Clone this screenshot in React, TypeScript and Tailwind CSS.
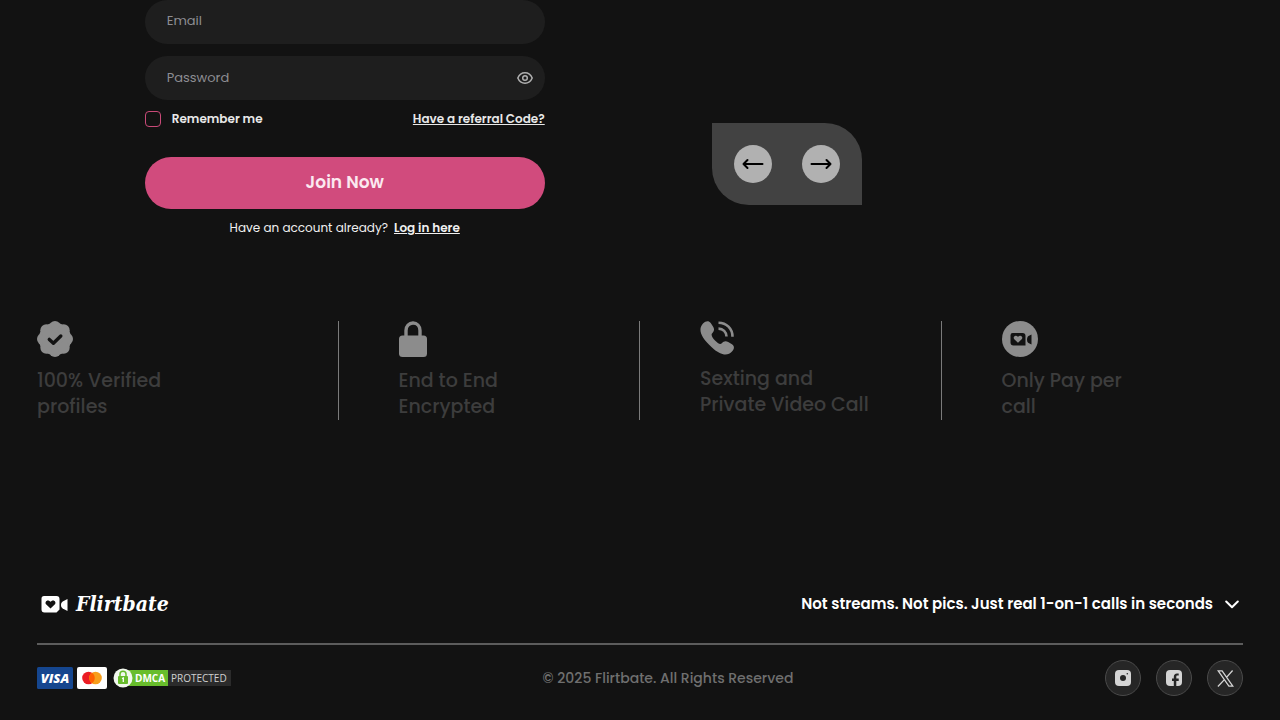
import { useState } from 'react';
import type { ReactNode } from 'react';

const VerifiedIcon = () => (
    <svg width="36" height="36" viewBox="0 0 36 36" fill="#8c8c8c" aria-hidden="true">
        <circle cx="18" cy="18" r="16.200" />
        <circle cx="18" cy="6" r="6" />
        <circle cx="18" cy="30" r="6" />
        <circle cx="6" cy="18" r="6" />
        <circle cx="30" cy="18" r="6" />
        <circle cx="9.300" cy="9.300" r="6" />
        <circle cx="26.700" cy="9.300" r="6" />
        <circle cx="9.300" cy="26.700" r="6" />
        <circle cx="26.700" cy="26.700" r="6" />
        <path d="M12.300 18.400l4.100 3.800 7.400-7.200" fill="none" stroke="#121212" strokeWidth="3.400" strokeLinecap="round" strokeLinejoin="round" />
    </svg>
);

const LockIcon = () => (
    <svg width="28" height="36" viewBox="0 0 28 36" aria-hidden="true">
        <path d="M7 16V9.500C7 5 10 2 14 2s7 3 7 7.500V16" fill="none" stroke="#8c8c8c" strokeWidth="3.400" />
        <rect y="14.500" width="28" height="21.500" rx="3.500" fill="#8c8c8c" />
    </svg>
);

const PhoneIcon = () => (
    <svg width="34" height="34" viewBox="0 0 34 34" aria-hidden="true">
        <path
            d="M3 2.500C6-.5 8.800-.5 10.700 2L13 5.500c1.700 2.700 1.200 4.500-1 7-1.200 1.500.5 4.500 3 7s5 4.200 6.500 3c2.300-2.500 4.200-3 6.700-1.500l3.800 2.300c2.500 1.700 2.600 4.200 0 7.200-4 4.500-11 4.500-20-4C0 15.500-2 8 3 2.500z"
            fill="#8c8c8c"
        />
        <path d="M18.500 7.600c4.500 0 8 3.500 8 8M18.500 1.700c8 0 14 6 14 14" fill="none" stroke="#8c8c8c" strokeWidth="2.600" />
    </svg>
);

const PayIcon = () => (
    <svg width="36" height="36" viewBox="0 0 36 36" aria-hidden="true">
        <circle cx="18" cy="18" r="18" fill="#8c8c8c" />
        <path d="M10.800 12h9.700a3 3 0 013 3v9.500h-12a3 3 0 01-3-3v-7.300a2.200 2.200 0 012.300-2.200z" fill="#121212" />
        <path d="M29.500 13.500v10l-3-1.500c-2-1-2-6 0-7z" fill="#121212" />
        <path d="M16 21.800l-3.700-3.500c-1.600-1.700.2-4.500 2.400-3.400l1.300.9 1.300-.9c2.200-1.100 4 1.700 2.400 3.400z" fill="#8c8c8c" />
    </svg>
);

const LogoMark = () => (
    <svg width="27" height="17" viewBox="0 0 27 17" fill="#fff" aria-hidden="true">
        <path d="M3 0h12.500a3 3 0 013 3v10.500l-3 3H3.500a3 3 0 01-3-3v-11A2.500 2.500 0 013 0z" />
        <path d="M26.500 3v12l-4.800-2.500c-2.300-1.500-2.300-5.500 0-7z" />
        <path d="M9.500 12.500L5.300 8.600c-2-2.200.3-5.200 2.800-3.900l1.400 1 1.400-1c2.500-1.300 4.800 1.700 2.800 3.900z" fill="#121212" />
    </svg>
);

const EyeIcon = () => (
    <svg width="16" height="12" viewBox="0 0 16 12" fill="none" stroke="#b0b0b0" strokeWidth="1.500" aria-hidden="true">
        <path d="M.8 6C2.200 2.600 4.800.8 8 .8S13.800 2.600 15.200 6C13.800 9.400 11.200 11.200 8 11.200S2.200 9.400.8 6z" />
        <circle cx="8" cy="6" r="2.300" />
    </svg>
);

const ArrowIcon = () => (
    <svg width="22" height="12" viewBox="0 0 22 12" fill="none" stroke="#000" strokeWidth="2" strokeLinecap="round" strokeLinejoin="round" aria-hidden="true">
        <path d="M20.500 6H1.500M5.500 2l-4 4 4 4" />
    </svg>
);

const VisaCard = () => (
    <svg width="36" height="22" viewBox="0 0 36 22" role="img" aria-label="Visa">
        <rect width="36" height="22" rx="1.500" fill="#15468f" />
        <text x="18" y="15.500" textAnchor="middle" fill="#fff" fontSize="13" fontWeight="800" fontStyle="italic" fontFamily="'Open Sans', sans-serif">VISA</text>
    </svg>
);

const MasterCard = () => (
    <svg width="30" height="22" viewBox="0 0 30 22" role="img" aria-label="Mastercard">
        <rect width="30" height="22" rx="2" fill="#fff" />
        <circle cx="11.500" cy="11" r="6.300" fill="#eb1c24" />
        <circle cx="18.500" cy="11" r="6.300" fill="#f79e1b" />
        <path d="M15 5.800a6.300 6.300 0 010 10.400 6.300 6.300 0 010-10.400z" fill="#ff5f00" />
    </svg>
);

const DmcaBadge = () => (
    <svg width="118" height="20" viewBox="0 0 118 20" role="img" aria-label="DMCA Protected">
        <rect x="55" y="2" width="63" height="16" fill="#2b2b2b" />
        <rect x="10" y="2" width="45" height="16" fill="#68bd2c" />
        <circle cx="10" cy="10" r="9.500" fill="#f2f8ee" />
        <path d="M7 8V6c0-3.800 6-3.800 6 0v2" fill="none" stroke="#68bd2c" strokeWidth="1.500" />
        <rect x="5" y="8" width="10" height="8" rx="1" fill="#68bd2c" />
        <path d="M9 10.500l1.300-.5v4" fill="none" stroke="#fff" strokeWidth="1.300" />
        <text x="22" y="14" fill="#fff" fontSize="10" fontWeight="700" fontFamily="'Open Sans', sans-serif">DMCA</text>
        <text x="58" y="14" fill="#d0d0d0" fontSize="10" fontFamily="'Open Sans', sans-serif">PROTECTED</text>
    </svg>
);

const InstagramIcon = () => (
    <svg width="16" height="16" viewBox="0 0 16 16" aria-hidden="true">
        <rect width="16" height="16" rx="4" fill="#d4d4d4" />
        <circle cx="8" cy="8" r="3" fill="#262626" />
        <circle cx="12.300" cy="3.700" r=".8" fill="#262626" />
    </svg>
);

const FacebookIcon = () => (
    <svg width="16" height="16" viewBox="0 0 16 16" aria-hidden="true">
        <rect width="16" height="16" rx="4" fill="#d4d4d4" />
        <path d="M7.800 16v-5H6V8.600h1.800V7c0-2.300 1.200-3.600 3.200-3.600h1.700v2.200h-1.300c-.8 0-1.100.4-1.100 1.200v1.800h2.400V11h-2.400v5z" fill="#262626" />
    </svg>
);

const XIcon = () => (
    <svg width="17" height="17" viewBox="0 0 17 17" fill="none" stroke="#d4d4d4" strokeWidth="1.300" aria-hidden="true">
        <path d="M1.200.9h3.900l10.700 15.200h-3.900zM15.600.5L9.500 7.400M7.400 9.600L.9 16.500" />
    </svg>
);

const features: { id: string; icon: ReactNode; lines: string[] }[] = [
    { id: 'verified', icon: <VerifiedIcon />, lines: ['100% Verified', 'profiles'] },
    { id: 'encrypted', icon: <LockIcon />, lines: ['End to End', 'Encrypted'] },
    { id: 'calls', icon: <PhoneIcon />, lines: ['Sexting and', 'Private Video Call'] },
    { id: 'pay', icon: <PayIcon />, lines: ['Only Pay per', 'call'] },
];

const socials = [
    { name: 'Instagram', icon: <InstagramIcon /> },
    { name: 'Facebook', icon: <FacebookIcon /> },
    { name: 'X', icon: <XIcon /> },
];

const SignUpForm = () => {
    const [showPassword, setShowPassword] = useState(false);

    return (
        <form onSubmit={(e) => e.preventDefault()} className="w-full max-w-[400px] mx-auto">
            <input
                type="email"
                aria-label="Email"
                placeholder="Email"
                className="block w-full h-11 rounded-full bg-[#1e1e1e] px-[22px] pb-0.5 text-[13px] text-white placeholder:text-[#8d8d92] outline-none"
            />
            <div className="mt-3 flex h-11 items-center rounded-full bg-[#1e1e1e] pl-[22px] pr-3">
                <input
                    type={showPassword ? 'text' : 'password'}
                    aria-label="Password"
                    placeholder="Password"
                    className="min-w-0 flex-1 bg-transparent text-[13px] text-white placeholder:text-[#8d8d92] outline-none"
                />
                <button type="button" aria-label="Show password" onClick={() => setShowPassword(!showPassword)}>
                    <EyeIcon />
                </button>
            </div>
            <div className="mt-[11px] flex h-4 items-center justify-between text-xs font-semibold text-[#e8e8e8]">
                <label className="flex items-center gap-[11px]">
                    <input type="checkbox" className="size-4 appearance-none rounded-sm border border-[#c94a78] checked:bg-[#d14b7d]" />
                    Remember me
                </label>
                <a href="#referral" className="underline">Have a referral Code?</a>
            </div>
            <button type="submit" className="mt-[30px] block h-[52px] w-full rounded-full bg-[#d14b7d] text-[17px] font-semibold text-[#fbe9f0]">
                Join Now
            </button>
            <p className="mt-[11px] text-center text-xs leading-4 text-[#f0f0f0]">
                Have an account already?
                <a href="#login" className="ml-1.5 font-semibold underline">Log in here</a>
            </p>
        </form>
    );
};

const App = () => {
    return (
        <div className="min-h-screen bg-[#121212] px-[37px] pb-6 font-[Poppins,Inter,sans-serif]">
            <section className="grid grid-cols-[29fr_25fr] gap-[60px]">
                <SignUpForm />
                <div className="pt-[123px]">
                    <div className="flex h-[82px] w-[150px] items-center justify-center gap-[30px] rounded-tr-[37px] rounded-bl-[37px] bg-[#424242]">
                        <button type="button" aria-label="Previous" className="flex size-[38px] items-center justify-center rounded-full bg-[#b1b1b1]">
                            <ArrowIcon />
                        </button>
                        <button type="button" aria-label="Next" className="flex size-[38px] rotate-180 items-center justify-center rounded-full bg-[#b1b1b1]">
                            <ArrowIcon />
                        </button>
                    </div>
                </div>
            </section>

            <section className="mt-[85px] grid grid-cols-4">
                {features.map((feature) => (
                    <div key={feature.id} className="border-r border-[#7a7a7a] pl-[60px] first:pl-0 last:border-r-0">
                        {feature.icon}
                        <p className="mt-[11px] text-[19px] leading-[26px] font-medium text-[#3d3d3d]">
                            {feature.lines[0]}
                            <br />
                            {feature.lines[1]}
                        </p>
                    </div>
                ))}
            </section>

            <footer className="mt-[172px]">
                <div className="flex items-center justify-between border-b-2 border-[#5c5c5c] pb-[27px]">
                    <a href="#home" className="ml-1 flex h-6 items-center gap-2 text-white">
                        <LogoMark />
                        <span className="font-['DejaVu_Serif_Condensed','DejaVu_Serif',serif] text-[21px] font-bold italic leading-6">Flirtbate</span>
                    </a>
                    <button type="button" className="mr-1 flex items-center gap-3 text-[15px] leading-6 font-semibold text-white">
                        Not streams. Not pics. Just real 1-on-1 calls in seconds
                        <svg width="14" height="9" viewBox="0 0 14 9" fill="none" stroke="currentColor" strokeWidth="2" strokeLinecap="round" strokeLinejoin="round" aria-hidden="true">
                            <path d="M1.200 1.500L7 7.300l5.800-5.800" />
                        </svg>
                    </button>
                </div>
                <div className="flex items-center justify-between pt-[15px]">
                    <div className="flex items-center">
                        <VisaCard />
                        <div className="ml-1 mr-1.5">
                            <MasterCard />
                        </div>
                        <DmcaBadge />
                    </div>
                    <p className="text-sm font-medium text-[#6f6f6f]">© 2025 Flirtbate. All Rights Reserved</p>
                    <div className="flex gap-[15px]">
                        {socials.map((social) => (
                            <a
                                key={social.name}
                                href={`#${social.name.toLowerCase()}`}
                                aria-label={social.name}
                                className="flex size-9 items-center justify-center rounded-full border border-[#4a4a4a] bg-[#262626]"
                            >
                                {social.icon}
                            </a>
                        ))}
                    </div>
                </div>
            </footer>
        </div>
    );
};

export default App;
